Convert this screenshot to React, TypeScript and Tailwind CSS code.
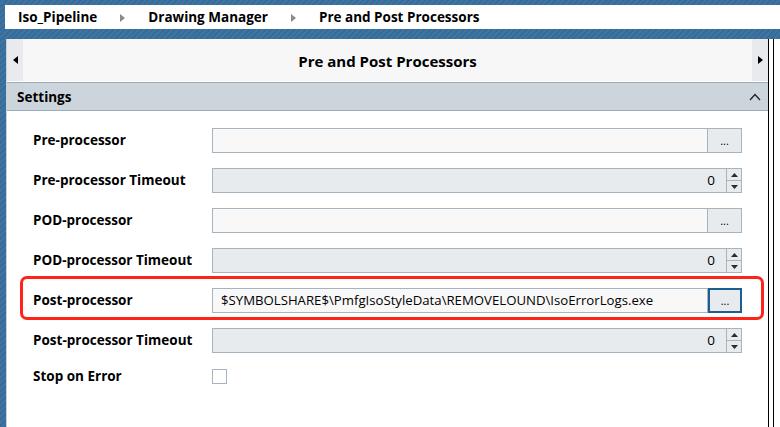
import React from "react";

type FieldKind = "path" | "number" | "check";

type Field = {
  label: string;
  kind: FieldKind;
  value?: string;
  focused?: boolean;
};

const fields: Field[] = [
  { label: "Pre-processor", kind: "path", value: "" },
  { label: "Pre-processor Timeout", kind: "number", value: "0" },
  { label: "POD-processor", kind: "path", value: "" },
  { label: "POD-processor Timeout", kind: "number", value: "0" },
  {
    label: "Post-processor",
    kind: "path",
    value: "$SYMBOLSHARE$\\PmfgIsoStyleData\\REMOVELOUND\\IsoErrorLogs.exe",
    focused: true,
  },
  { label: "Post-processor Timeout", kind: "number", value: "0" },
  { label: "Stop on Error", kind: "check" },
];

const crumbs = ["Iso_Pipeline", "Drawing Manager", "Pre and Post Processors"];

function Caret({ dir, className = "" }: { dir: "left" | "right"; className?: string }) {
  return (
    <svg width="5" height="8" viewBox="0 0 5 8" className={className}>
      {dir === "right" ? <path d="M0 0 L5 4 L0 8 Z" fill="currentColor" /> : <path d="M5 0 L0 4 L5 8 Z" fill="currentColor" />}
    </svg>
  );
}

function Spinner() {
  return (
    <div className="flex w-[15px] flex-col border border-l-0 border-[#a7b3bf] bg-[#e8ebee]">
      <div className="flex flex-1 items-center justify-center border-b border-[#a7b3bf]">
        <svg width="7" height="4" viewBox="0 0 7 4">
          <path d="M0 4 L3.5 0 L7 4 Z" fill="#2b2b2b" />
        </svg>
      </div>
      <div className="flex flex-1 items-center justify-center">
        <svg width="7" height="4" viewBox="0 0 7 4">
          <path d="M0 0 L3.5 4 L7 0 Z" fill="#2b2b2b" />
        </svg>
      </div>
    </div>
  );
}

function FieldControl({ field }: { field: Field }) {
  if (field.kind === "check") {
    return <div className="h-[15px] w-[15px] border border-[#a7b3bf] bg-white" />;
  }
  if (field.kind === "number") {
    return (
      <div className="flex h-[25px] w-[530px]">
        <div className="flex flex-1 items-center justify-end border border-[#a7b3bf] bg-[#e8ebee] pr-[11px] text-[13.5px] text-black">
          {field.value}
        </div>
        <Spinner />
      </div>
    );
  }
  return (
    <div className="flex h-[25px] w-[530px]">
      <div className="flex flex-1 items-center overflow-hidden whitespace-nowrap border border-[#a7b3bf] bg-[#f8f8f8] pl-[8px] text-[13.2px] text-black">
        {field.value}
      </div>
      {field.focused ? (
        <div className="flex w-[34px] items-end justify-center border-2 border-[#1b5e92] bg-[#e8ebee] pb-[5px] text-[11px] leading-none text-black">
          ...
        </div>
      ) : (
        <div className="flex w-[34px] items-end justify-center border border-l-0 border-[#a7b3bf] bg-[#e8ebee] pb-[6px] text-[11px] leading-none text-black">
          ...
        </div>
      )}
    </div>
  );
}

export default function App() {
  return (
    <div
      className="flex h-[427px] w-[780px] flex-col overflow-hidden bg-[repeating-linear-gradient(135deg,#376b99_0px,#376b99_2px,#3f75a3_2px,#3f75a3_4px)] pt-[5px] font-['Open_Sans','Noto_Sans',sans-serif] text-black"
    >
      {/* breadcrumb bar */}
      <div className="ml-[5px] flex h-[24px] items-center bg-white pl-[13px] pt-px text-[13.5px] font-bold">
        {crumbs.map((c, i) => (
          <React.Fragment key={c}>
            {i > 0 && <Caret dir="right" className="mx-[23px] text-[#8a8a8a]" />}
            <span>{c}</span>
          </React.Fragment>
        ))}
      </div>

      <div className="mt-[10px] flex flex-1">
        {/* settings panel */}
        <div className="ml-[6px] flex w-[762px] flex-col border-l border-[#c9d1d9] bg-white">
          <div className="flex h-[42px] bg-[#f7f7f7]">
            <div className="flex w-[16px] items-center justify-center bg-[#e8eaed] text-black">
              <Caret dir="left" />
            </div>
            <div className="flex flex-1 items-center justify-center pt-[2px] text-[15px] font-bold">Pre and Post Processors</div>
            <div className="flex w-[16px] items-center justify-center bg-[#e8eaed] text-black">
              <Caret dir="right" />
            </div>
          </div>
          <div className="h-px bg-white" />
          <div className="flex h-[29px] items-center justify-between border-y border-[#9eacb9] bg-[#ccd4dc] pl-[10px] pr-[7px] pt-px text-[13.5px] font-bold">
            <span>Settings</span>
            <svg width="12" height="8" viewBox="0 0 12 8">
              <polyline points="1,7 6,1.5 11,7" fill="none" stroke="#222" strokeWidth="1.3" />
            </svg>
          </div>

          <div className="relative flex flex-col gap-[15px] pl-[26px] pt-[17px]">
            {/* highlight drawn around the post-processor row */}
            <div className="pointer-events-none absolute left-[13px] top-[165px] h-[44px] w-[744px] rounded-[7px] border-[3px] border-[#ff2318]" />
            {fields.map((f) => (
              <div key={f.label} className={`flex items-center ${f.kind === "check" ? "mt-[1px] h-[15px]" : "h-[25px]"}`}>
                <div className="w-[179px] text-[13.5px] font-bold">{f.label}</div>
                <FieldControl field={f} />
              </div>
            ))}
          </div>
        </div>

        {/* double edge on the right */}
        <div className="flex flex-1 bg-white">
          <div className="w-px bg-black" />
          <div className="w-[4px] bg-white" />
          <div className="w-px bg-black" />
        </div>
      </div>
    </div>
  );
}
